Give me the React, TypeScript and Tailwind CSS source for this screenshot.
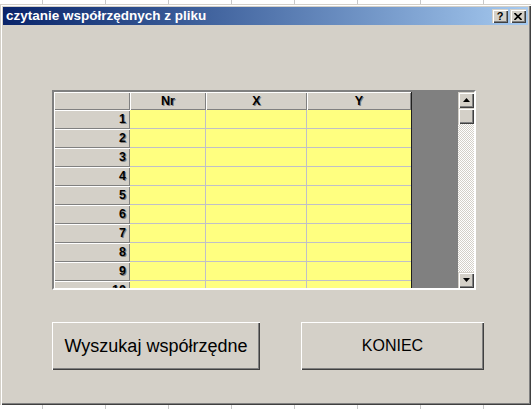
import React from 'react';

const rows = [1, 2, 3, 4, 5, 6, 7, 8, 9, 10];

const raised =
  'shadow-[inset_1px_1px_#d4d0c8,inset_2px_2px_#fff,inset_-1px_-1px_#404040,inset_-2px_-2px_#808080]';
const headerCell = 'shadow-[inset_1px_1px_#fff,inset_-1px_-1px_#808080]';
const embossed = '[text-shadow:1px_1px_0_#808080]';

function Arrow({ down }: { down?: boolean }) {
  return (
    <svg width="7" height="4" viewBox="0 0 7 4">
      <polygon points={down ? '0,0 7,0 3.5,4' : '3.5,0 7,4 0,4'} fill="#000" />
    </svg>
  );
}

export default function App() {
  return (
    <div className="w-[532px] h-[409px] pt-[4px] bg-white bg-[linear-gradient(90deg,#c8c8c8_1px,transparent_1px)] bg-[length:63px_100%] bg-[position:42px_0] font-['Liberation_Sans',Arial,sans-serif]">
      {/* dialog */}
      <div className="w-[531px] h-[401px] p-[3px] bg-[#d4d0c8] shadow-[inset_1px_1px_#d4d0c8,inset_2px_2px_#fff,inset_-1px_-1px_#404040,inset_-2px_-2px_#808080] flex flex-col">
        {/* title bar */}
        <div className="h-[18px] flex items-center bg-linear-to-r from-[#0a246a] to-[#a6caf0] pl-[3px] pr-[2px]">
          <span className="text-white font-bold text-[13.5px] leading-none">czytanie współrzędnych z pliku</span>
          <div className="ml-auto flex gap-[2px]">
            <div className={`w-[16px] h-[14px] bg-[#d4d0c8] ${raised} flex items-center justify-center text-[11px] font-bold leading-none text-black`}>
              ?
            </div>
            <div className={`w-[16px] h-[14px] bg-[#d4d0c8] ${raised} flex items-center justify-center`}>
              <svg width="8" height="7" viewBox="0 0 8 7">
                <path d="M0.5 0 L7.5 7 M7.5 0 L0.5 7" stroke="#000" strokeWidth="1.6" />
              </svg>
            </div>
          </div>
        </div>

        {/* client area */}
        <div className="flex-1 pl-[49px] pt-[65px]">
          {/* grid */}
          <div className="w-[424px] h-[200px] border-2 border-t-[#808080] border-l-[#808080] border-b-white border-r-white">
            <div className="h-full flex shadow-[inset_1px_1px_#404040]">
              <div className="w-[357px] h-full overflow-hidden flex flex-col text-[12.5px] font-bold text-black">
                <div className="h-[18px] shrink-0 flex">
                  <div className={`w-[76px] bg-[#d4d0c8] ${headerCell}`} />
                  <div className={`w-[76px] bg-[#d4d0c8] ${headerCell} flex items-center justify-center ${embossed}`}>Nr</div>
                  <div className={`w-[101px] bg-[#d4d0c8] ${headerCell} flex items-center justify-center ${embossed}`}>X</div>
                  <div className={`w-[104px] bg-[#d4d0c8] ${headerCell} flex items-center justify-center ${embossed}`}>Y</div>
                </div>
                {rows.map((r) => (
                  <div key={r} className="h-[19px] shrink-0 flex">
                    <div className={`w-[76px] bg-[#d4d0c8] ${headerCell} flex items-center justify-end pr-[4px] ${embossed}`}>{r}</div>
                    <div className="w-[76px] bg-[#ffff80] border-r border-b border-[#c0c0c8]" />
                    <div className="w-[101px] bg-[#ffff80] border-r border-b border-[#c0c0c8]" />
                    <div className="w-[104px] bg-[#ffff80] border-b border-[#c0c0c8]" />
                  </div>
                ))}
              </div>
              <div className="w-[47px] h-full bg-[#808080] border-l border-[#202020]" />
              {/* scrollbar */}
              <div className="w-[16px] h-full flex flex-col bg-[repeating-conic-gradient(#fff_0_25%,#d4d0c8_0_50%)] bg-[length:2px_2px]">
                <div className={`h-[16px] bg-[#d4d0c8] ${raised} flex items-center justify-center`}>
                  <Arrow />
                </div>
                <div className={`h-[16px] bg-[#d4d0c8] ${raised}`} />
                <div className={`mt-auto h-[16px] bg-[#d4d0c8] ${raised} flex items-center justify-center`}>
                  <Arrow down />
                </div>
              </div>
            </div>
          </div>

          {/* buttons */}
          <div className="mt-[32px] flex gap-[41px]">
            <button className="w-[208px] h-[48px] bg-[#d4d0c8] shadow-[inset_1px_1px_#fff,inset_-1px_-1px_#404040,inset_-2px_-2px_#808080] text-[18px] text-black">
              Wyszukaj współrzędne
            </button>
            <button className="w-[183px] h-[48px] bg-[#d4d0c8] shadow-[inset_1px_1px_#fff,inset_-1px_-1px_#404040,inset_-2px_-2px_#808080] text-[16px] text-black">
              KONIEC
            </button>
          </div>
        </div>
      </div>
    </div>
  );
}
